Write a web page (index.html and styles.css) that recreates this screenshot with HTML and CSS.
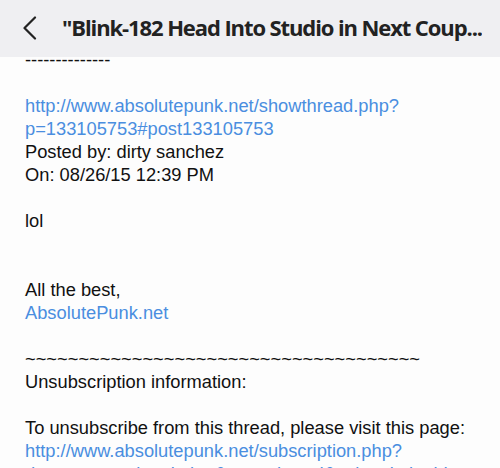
FILE: index.html
```html
<!DOCTYPE html>
<html>
	<head>
		<meta charset="utf-8" />
		<title>Blink-182 Head Into Studio</title>
		<link rel="stylesheet" href="styles.css">
	</head>
	<body>
		<header class="bar">
			<a class="back" href="javascript:">
				<svg width="16" height="24" viewBox="0 0 16 24"><polyline points="13,1.5 2.5,12 13,22.5" fill="none" stroke="#222" stroke-width="2.2" stroke-linecap="round" stroke-linejoin="round"/></svg>
			</a>
			<span class="title">"Blink-182 Head Into Studio in Next Coup...</span>
		</header>
		<article class="mail">
			<p>--------------</p>
			<p>&nbsp;</p>
			<p><a href="javascript:">http://www.absolutepunk.net/showthread.php?<br>p=133105753#post133105753</a></p>
			<p>Posted by: dirty sanchez</p>
			<p>On: 08/26/15 12:39 PM</p>
			<p>&nbsp;</p>
			<p>lol</p>
			<p>&nbsp;</p>
			<p>&nbsp;</p>
			<p>All the best,</p>
			<p><a href="javascript:">AbsolutePunk.net</a></p>
			<p>&nbsp;</p>
			<p>~~~~~~~~~~~~~~~~~~~~~~~~~~~~~~~~~~~~~</p>
			<p>Unsubscription information:</p>
			<p>&nbsp;</p>
			<p>To unsubscribe from this thread, please visit this page:</p>
			<p><a href="javascript:">http://www.absolutepunk.net/subscription.php?<br>do=removesubscription&amp;type=thread&amp;subscriptionid=</a></p>
		</article>
	</body>
</html>
```

FILE: styles.css
```css
*{margin: 0;padding: 0;}
html,body{
	height: 100%;
	overflow: hidden;
	background: #fdfdfd;
}
body{
	font-family: "Liberation Sans", Arial, sans-serif;
	font-size: 18.3px;
	color: #111;
}
a{
	text-decoration: none;
	color: #4a8ee0;
}
.bar{
	position: fixed;
	top: 0;
	left: 0;
	right: 0;
	height: 57px;
	background: #efeff2;
	display: flex;
	align-items: center;
	padding: 0 10px 0 22px;
	z-index: 2;
}
.back{
	display: flex;
	width: 40px;
	flex: none;
	margin-top: -2px;
}
.title{
	font-family: "Open Sans", "Noto Sans", sans-serif;
	font-weight: 700;
	font-size: 22px;
	letter-spacing: -1.1px;
	color: #222;
	white-space: nowrap;
	overflow: hidden;
	margin-top: -3px;
}
.mail{
	padding: 48px 10px 0 25px;
	line-height: 23px;
}
.mail p{
	white-space: nowrap;
}
```
